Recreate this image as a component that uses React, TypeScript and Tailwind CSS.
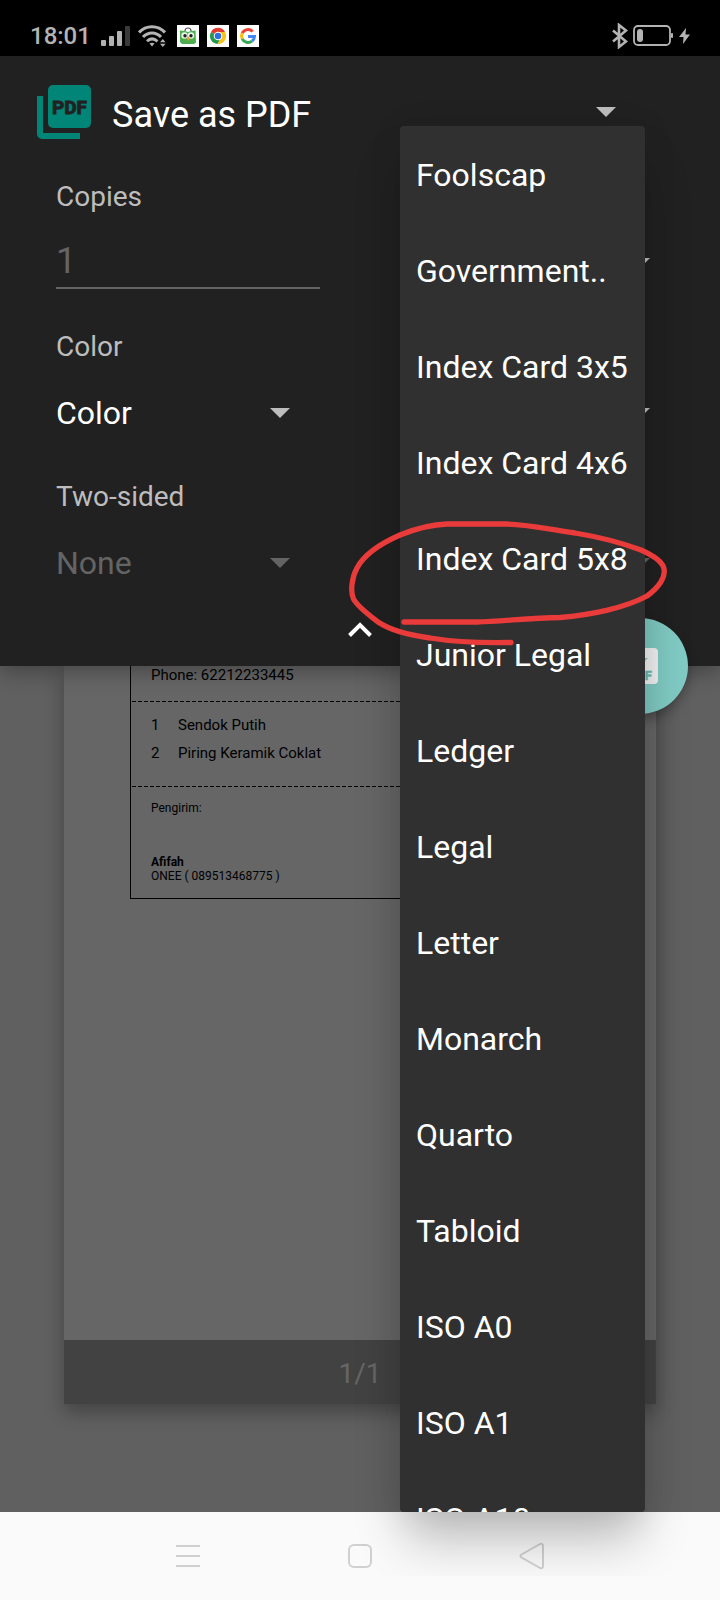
import React from "react";

const PAPER_SIZES = [
  "Foolscap",
  "Government..",
  "Index Card 3x5",
  "Index Card 4x6",
  "Index Card 5x8",
  "Junior Legal",
  "Ledger",
  "Legal",
  "Letter",
  "Monarch",
  "Quarto",
  "Tabloid",
  "ISO A0",
  "ISO A1",
  "ISO A10",
];

function Caret({ className }: { className: string }) {
  return (
    <svg viewBox="0 0 20 10" className={`pointer-events-none h-[10px] w-5 shrink-0 ${className}`} aria-hidden="true">
      <path d="M0 0h20L10 10z" fill="currentColor" />
    </svg>
  );
}

function Spinner({
  id,
  options,
  disabled = false,
  size = "text-[32px]",
  label,
}: {
  id: string;
  options: string[];
  disabled?: boolean;
  size?: string;
  label?: string;
}) {
  return (
    <div className={`grid h-full grid-cols-1 items-center ${disabled ? "text-[#646464]" : "text-white"}`}>
      <select
        id={id}
        aria-label={label}
        disabled={disabled}
        className={`col-start-1 row-start-1 h-12 w-full appearance-none bg-transparent p-0 opacity-100 outline-none ${size}`}
      >
        {options.map((o) => (
          <option key={o}>{o}</option>
        ))}
      </select>
      <Caret
        className={`col-start-1 row-start-1 mr-[30px] justify-self-end ${disabled ? "text-[#646464]" : "text-[#bdbdbd]"}`}
      />
    </div>
  );
}

function Field({ id, label, children }: { id: string; label?: string; children: React.ReactNode }) {
  return (
    <div className="flex h-[150px] flex-col pr-10 pl-14">
      <div className="flex h-14 items-center pt-0.5 text-[28px] text-[#bdbdbd]">
        {label && <label htmlFor={id}>{label}</label>}
      </div>
      <div className="h-[78px]">{children}</div>
    </div>
  );
}

function StatusBar() {
  return (
    <header className="flex h-14 items-center bg-black pt-4 pr-[30px] pl-[30px] text-[#b4b4b4]">
      <span className="text-2xl font-medium">18:01</span>
      <svg viewBox="0 0 30 20" className="ml-[10px] h-5 w-[30px]" aria-hidden="true">
        <g fill="currentColor">
          <rect x="0" y="14" width="5" height="6" rx="1" />
          <rect x="8" y="10" width="5" height="10" rx="1" />
          <rect x="16" y="5" width="5" height="15" rx="1" />
          <rect x="24" y="0" width="5" height="20" rx="1" fill="#3a3a3a" />
        </g>
      </svg>
      <svg viewBox="0 0 28 22" className="ml-[7px] h-[22px] w-7" fill="none" stroke="currentColor" aria-hidden="true">
        <path d="M1 7.500C8-.3 20-.3 27 7.500" strokeWidth="3" />
        <path d="M5 12c5-5.500 13-5.500 18 0" strokeWidth="3" />
        <path d="M9 16.300c3-3 7-3 10.500 0" strokeWidth="3" />
        <path d="M11.500 18.500q2.500-1.600 5 0L14 21.500z" fill="currentColor" stroke="none" />
        <path d="M22 17.300L24.800 14l2.800 3.300zM22 18.700l2.800 3.300 2.800-3.300z" fill="currentColor" stroke="none" />
      </svg>
      <div className="ml-[11px] flex gap-2">
        <svg viewBox="0 0 22 22" className="size-[22px]" aria-hidden="true">
          <rect width="22" height="22" fill="#fff" />
          <path d="M8 6c0-4 6-4 6 0" fill="none" stroke="#555" strokeWidth="1.200" />
          <path d="M3 5.500l5 .5 3 1 3-1 4.500-.5.500 12-2 1.500H5l-2-2z" fill="#4caf50" />
          <circle cx="7.500" cy="10.500" r="3.200" fill="#e8f5e9" />
          <circle cx="14" cy="10.500" r="3.200" fill="#e8f5e9" />
          <circle cx="8" cy="10.800" r="1.700" fill="#222" />
          <circle cx="14" cy="10.800" r="1.700" fill="#222" />
          <path d="M9.500 13l1.500-1.500 2 1.500-1.500 3z" fill="#f0a030" />
        </svg>
        <svg viewBox="0 0 22 22" className="size-[22px]" aria-hidden="true">
          <rect width="22" height="22" fill="#fff" />
          <path d="M11 11L4 7a8 8 0 0 1 14 0z" fill="#e23b2e" />
          <path d="M11 11L4 7a8 8 0 0 0 6.500 12l3.500-6z" fill="#27994a" />
          <path d="M11 7h7a8 8 0 0 1-7.500 12L14.500 13z" fill="#fbc116" />
          <circle cx="11" cy="11" r="4.300" fill="#fff" />
          <circle cx="11" cy="11" r="3.300" fill="#2f6fe0" />
        </svg>
        <svg viewBox="0 0 22 22" className="size-[22px]" fill="none" strokeWidth="3" aria-hidden="true">
          <rect width="22" height="22" fill="#fff" />
          <path d="M15.700 6.500A6.500 6.500 0 0 0 5.200 8.200" stroke="#ea4335" />
          <path d="M5.200 8.200a6.500 6.500 0 0 0 0 5.600" stroke="#fbbc05" />
          <path d="M5.200 13.800a6.500 6.500 0 0 0 9.800 2.300" stroke="#34a853" />
          <path d="M15 16.100a6.500 6.500 0 0 0 2.500-4.600H11" stroke="#4285f4" />
        </svg>
      </div>
      <svg viewBox="0 0 16 26" className="ml-auto h-[26px] w-4" fill="none" stroke="currentColor" strokeWidth="2.600" aria-hidden="true">
        <path d="M1 7.500L14 18.500l-7 5.500V2l7 5.500L1 18.500" />
      </svg>
      <svg viewBox="0 0 40 22" className="ml-[5px] h-[22px] w-10" aria-hidden="true">
        <rect x="1" y="1" width="36" height="19" rx="4" fill="none" stroke="currentColor" strokeWidth="1.800" />
        <rect x="4" y="4" width="6" height="13" rx="3" fill="currentColor" />
        <rect x="38" y="8" width="2" height="5" rx="1" fill="currentColor" />
      </svg>
      <svg viewBox="0 0 11 16" className="ml-1.5 h-4 w-[11px]" aria-hidden="true">
        <path d="M7 0L0 9h4.500L4 16l7-9.500H6.500z" fill="currentColor" />
      </svg>
    </header>
  );
}

function PdfIcon() {
  return (
    <svg viewBox="0 0 54 54" className="size-[54px] shrink-0" aria-hidden="true">
      <rect x="11" y="0" width="43" height="43" rx="5" fill="#008577" />
      <path d="M0 11h6v37h37v6H5a5 5 0 0 1-5-5z" fill="#008577" />
      <text
        x="32.500"
        y="29"
        textAnchor="middle"
        className="font-[Roboto,sans-serif] text-[19px] font-bold"
        fill="#212121"
        stroke="#212121"
        strokeWidth="0.900"
      >
        PDF
      </text>
    </svg>
  );
}

function PrintOptions() {
  return (
    <section className="relative z-10 bg-[#212121] shadow-[0_6px_20px_rgba(0,0,0,0.3)]">
      <div className="flex h-28 items-center pr-[74px] pl-[37px]">
        <PdfIcon />
        <div className="ml-[21px] flex-1">
          <Spinner id="destination" label="Destination" options={["Save as PDF"]} size="text-[36px]" />
        </div>
      </div>
      <div className="grid grid-cols-2">
        <Field id="copies" label="Copies">
          <input
            id="copies"
            defaultValue="1"
            disabled
            className="h-[65px] w-full border-b-2 border-[#646464] bg-transparent pt-[10px] text-[36px] text-[#646464] outline-none"
          />
        </Field>
        <Field id="paper">
          <Spinner id="paper" label="Paper size" options={[""]} />
        </Field>
        <Field id="color" label="Color">
          <Spinner id="color" options={["Color"]} />
        </Field>
        <Field id="orientation">
          <Spinner id="orientation" label="Orientation" options={[""]} />
        </Field>
        <Field id="duplex" label="Two-sided">
          <Spinner id="duplex" options={["None"]} disabled />
        </Field>
        <Field id="pages">
          <Spinner id="pages" label="Pages" options={[""]} disabled />
        </Field>
      </div>
      <button className="flex h-12 w-full justify-center pt-1" aria-label="Collapse options">
        <svg viewBox="0 0 24 16" className="h-4 w-6" fill="none" stroke="#fff" strokeWidth="4" aria-hidden="true">
          <path d="M1.500 13.500L12 3l10.500 10.500" />
        </svg>
      </button>
      <button
        aria-label="Save to PDF"
        className="absolute right-8 -bottom-12 flex size-24 items-center justify-center rounded-full bg-[#80cbc4] shadow-[0_6px_12px_rgba(0,0,0,0.3)]"
      >
        <svg viewBox="0 0 36 36" className="size-9" aria-hidden="true">
          <rect width="36" height="36" rx="4" fill="#f2f2f2" />
          <path d="M14 4h8v6h4l-8 8-8-8h4z" fill="#80cbc4" />
          <text
            x="18"
            y="32"
            textAnchor="middle"
            className="font-[Roboto,sans-serif] text-[13px] font-bold"
            fill="#6cbab3"
            stroke="#6cbab3"
            strokeWidth="0.500"
          >
            PDF
          </text>
        </svg>
      </button>
    </section>
  );
}

function Perforation() {
  return (
    <svg className="block h-[1px] w-full" aria-hidden="true">
      <line x1="1" y1="0.500" x2="100%" y2="0.500" stroke="#000" strokeWidth="1" strokeDasharray="4 2" />
    </svg>
  );
}

function Preview() {
  return (
    <main className="flex flex-1 flex-col bg-[#606060] px-16 pb-[108px]">
      <article className="flex flex-1 flex-col bg-[#666] shadow-[0_8px_18px_rgba(0,0,0,0.3)]">
        <div className="mx-[66px] flex-1 text-black">
          <div className="border-x border-b border-black">
            <p className="h-[35px] pl-5 text-[15px] leading-[18px]">Phone: 62212233445</p>
            <Perforation />
            <ol className="h-[84px] pt-[9px] pl-5 text-[15px] leading-7">
              <li className="flex">
                <span className="w-[27px]">1</span>Sendok Putih
              </li>
              <li className="flex">
                <span className="w-[27px]">2</span>Piring Keramik Coklat
              </li>
            </ol>
            <Perforation />
            <div className="h-[111px] pt-[14px] pl-5 text-xs leading-[14px]">
              <p>Pengirim:</p>
              <p className="mt-10 font-bold">Afifah</p>
              <p>ONEE ( 089513468775 )</p>
            </div>
          </div>
        </div>
        <footer className="flex h-16 items-center justify-center bg-[#424242] pt-[3px] text-[28px] text-[#666]">1/1</footer>
      </article>
    </main>
  );
}

function NavBar() {
  return (
    <nav className="flex h-[88px] items-center justify-center bg-[#fafafa]" aria-label="System">
      <button className="flex w-[172px] justify-center" aria-label="Recent apps">
        <svg viewBox="0 0 24 24" className="size-6" stroke="#d0d0d0" strokeWidth="2" aria-hidden="true">
          <path d="M0 2h24M0 12h24M0 22h24" />
        </svg>
      </button>
      <button className="flex w-[172px] justify-center" aria-label="Home">
        <svg viewBox="0 0 24 24" className="size-6" fill="none" stroke="#d0d0d0" strokeWidth="2" aria-hidden="true">
          <rect x="1" y="1" width="22" height="22" rx="5" />
        </svg>
      </button>
      <button className="flex w-[172px] justify-center" aria-label="Back">
        <svg viewBox="0 0 26 28" className="h-7 w-[26px]" fill="none" stroke="#d0d0d0" strokeWidth="2" strokeLinejoin="round" aria-hidden="true">
          <path d="M2.500 12.500L21 2q3-1 3 2v20q0 3-3 2L2.500 15.500q-2-1.500 0-3z" />
        </svg>
      </button>
    </nav>
  );
}

function PaperMenu() {
  return (
    <div className="pointer-events-none absolute inset-x-0 top-0 bottom-6 z-20 overflow-hidden">
      <ul
        role="listbox"
        aria-label="Paper size"
        className="pointer-events-auto absolute top-[126px] right-[75px] bottom-16 w-[245px] overflow-hidden rounded-[4px] bg-[#303030] text-[32px] text-white shadow-[0_34px_48px_-6px_rgba(0,0,0,0.24),0_4px_36px_rgba(0,0,0,0.08)]"
      >
        {PAPER_SIZES.map((name) => (
          <li key={name} role="option" aria-selected={false} className="flex h-24 items-center px-4 pt-0.5 whitespace-nowrap">
            {name}
          </li>
        ))}
      </ul>
    </div>
  );
}

function HandDrawnCircle() {
  return (
    <svg
      viewBox="340 510 340 145"
      className="pointer-events-none absolute top-[510px] right-10 z-30 h-[145px] w-[340px]"
      fill="none"
      stroke="#ea3b3b"
      strokeWidth="5.300"
      strokeLinecap="round"
      strokeLinejoin="round"
      aria-hidden="true"
    >
      <path d="M511 642.500C490 643 455 642 430 638C408 635 390 630 378 622C369 615 358 607 353.500 599C350 591 352 577 357 568C365 553 384 542 400 535C415 529 430 524.500 447 524H507C530 524.500 545 529 575 533C605 538 625 544 641 550C652 555 661 560 663.500 567C667 577 658 588 647 596C625 608 590 615 560 617.500C530 618 505 621 477 622H404" />
    </svg>
  );
}

export default function App() {
  return (
    <div className="relative flex min-h-screen flex-col overflow-hidden font-[Roboto,sans-serif]">
      <StatusBar />
      <PrintOptions />
      <Preview />
      <NavBar />
      <PaperMenu />
      <HandDrawnCircle />
    </div>
  );
}
